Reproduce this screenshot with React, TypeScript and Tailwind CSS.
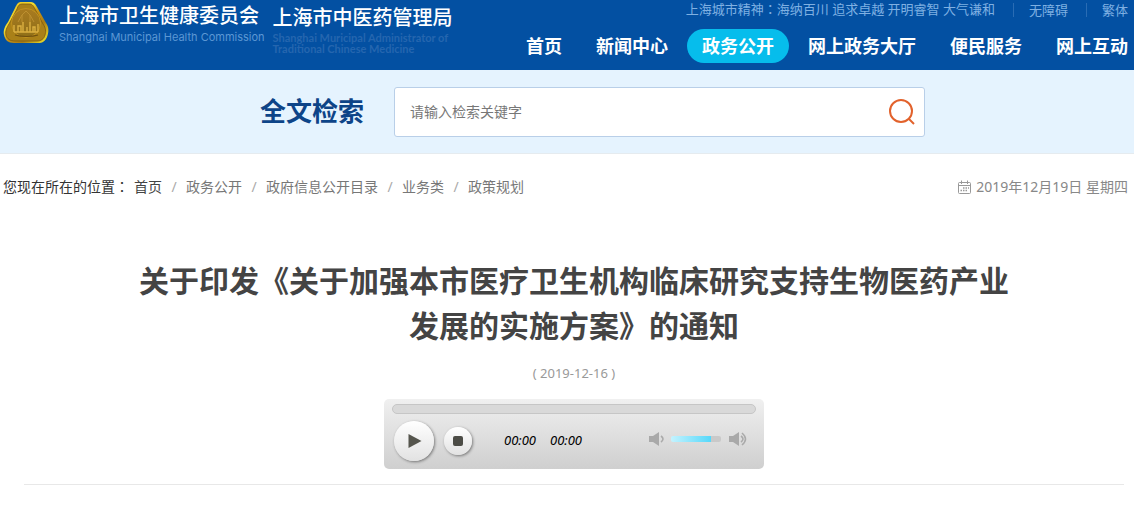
import { useState } from "react";

const navItems = ["首页", "新闻中心", "政务公开", "网上政务大厅", "便民服务", "网上互动"];
const crumbs = ["首页", "政务公开", "政府信息公开目录", "业务类", "政策规划"];

const Emblem = () => (
  <svg viewBox="0 0 46 42" className="h-[42px] w-[46px] shrink-0" aria-hidden="true">
    <defs>
      <linearGradient id="rim" x1="0" y1="0" x2="1" y2="1">
        <stop offset="0" stopColor="#e0b01c" />
        <stop offset="0.35" stopColor="#f3de30" />
        <stop offset="0.5" stopColor="#c79216" />
        <stop offset="0.7" stopColor="#a87c14" />
        <stop offset="1" stopColor="#f8f02e" />
      </linearGradient>
      <linearGradient id="face" x1="0" y1="0" x2="0" y2="1">
        <stop offset="0" stopColor="#a97b20" />
        <stop offset="1" stopColor="#8f6f18" />
      </linearGradient>
    </defs>
    <path
      d="M18 1H27C30 1 32 2 34 6L43 22C46 26 46 31 44 36C42 40 40 42 35 42H11C5 42 2 39 1 34C0 29 2 25 5 21L12 7C14 3 15 1 18 1Z"
      fill="url(#rim)"
    />
    <path
      d="M19 3H26C29 3 30 4 32 8L40 23C43 27 43 31 42 34C41 38 38 40 34 40H12C7 40 4 38 3 34C2 30 4 26 6 23L14 8C15 5 16 3 19 3Z"
      fill="#a98018"
      stroke="#7c5810"
      strokeWidth="0.8"
    />
    <circle cx="23" cy="22" r="14.5" fill="url(#face)" stroke="#c2921f" strokeWidth="1" />
    <path
      d="M19 21V14L23 10L27 14V21M15 21L19 14M31 21L27 14"
      fill="none"
      stroke="#bd9030"
      strokeWidth="1"
    />
    <path
      d="M11 24V31M15 31V25H18V31M20 31V21M24 31V26M27 31V21M30 31V26H32V31M35 23V31M11 31H35"
      fill="none"
      stroke="#dcb040"
      strokeWidth="1.4"
    />
    <path d="M12 34C18 36 29 36 35 34" fill="none" stroke="#70500f" strokeWidth="1.2" />
  </svg>
);

const CalendarIcon = () => (
  <svg viewBox="0 0 14 14" className="h-[14px] w-[14px]" fill="none" stroke="#999" aria-hidden="true">
    <rect x="0.5" y="2.5" width="12" height="11" rx="1" />
    <path d="M0.5 5.5H12.5M3.5 0.5V4M9.5 0.5V4" />
    <path d="M5 8H6.5M7.5 8H9M10 8H11M2.5 10.5H4M5 10.5H6.5M7.5 10.5H9" strokeWidth="1.4" />
  </svg>
);

const Speaker = ({ loud }: { loud?: boolean }) => (
  <svg viewBox="0 0 20 16" className="h-4 w-5" aria-hidden="true">
    <path d="M1 5H5L11 1V15L5 11H1Z" fill="#a9a9a9" />
    <path d="M13 5Q17 8 13 11" fill="none" stroke="#aaa" strokeWidth="1.6" />
    {loud && <path d="M14 2Q21 8 14 14" fill="none" stroke="#aaa" strokeWidth="1.6" />}
  </svg>
);

// The TC face sets the full-width colon in the middle of its box
const Colon = () => <span className="font-['Noto_Sans_CJK_TC',sans-serif] leading-none">：</span>;

const Header = () => (
  <header className="flex h-[70px] justify-between overflow-hidden bg-[#0350a2] pr-[6px] pl-[3px] text-white">
    <a href="#" className="flex items-start">
      <span className="pt-px">
        <Emblem />
      </span>
      <span className="ml-[10px] flex flex-col whitespace-nowrap">
        <span className="pt-1 text-[20px] leading-6 font-medium">上海市卫生健康委员会</span>
        <span className="pt-px font-['Inter'] text-[11px] leading-4 text-[#5b97d4]">
          Shanghai Municipal Health Commission
        </span>
      </span>
      <span className="ml-2 flex flex-col whitespace-nowrap">
        <span className="pt-[6px] text-[20px] leading-6 font-medium">上海市中医药管理局</span>
        <span className="pt-[2px] font-['Lato'] text-[11px] leading-[11px] font-bold text-[#2566af]">
          Shanghai Muricipal Administrator of
          <br />
          Traditional Chinese Medicine
        </span>
      </span>
    </a>
    <div className="flex shrink-0 flex-col items-end">
      <div className="flex h-5 items-center text-[13px] text-[#7fb0e2]">
        <span>
          上海城市精神
          <Colon />
          海纳百川 追求卓越 开明睿智 大气谦和
        </span>
        <a href="#" className="ml-[18px] border-l border-[#2a6cb4] pl-[15px] leading-[14px]">
          无障碍
        </a>
        <a href="#" className="ml-[18px] border-l border-[#2a6cb4] pl-[15px] leading-[14px]">
          繁体
        </a>
      </div>
      <nav className="mt-[9px] flex gap-1 text-[18px] leading-[34px] font-bold">
        {navItems.map((item) => (
          <a
            key={item}
            href="#"
            className={
              item === "政务公开"
                ? "rounded-full bg-[#06bdec] px-[15px] whitespace-nowrap"
                : "px-[15px] whitespace-nowrap last:pr-0"
            }
          >
            {item}
          </a>
        ))}
      </nav>
    </div>
  </header>
);

const SearchBar = () => (
  <form
    className="flex h-[84px] items-center justify-center gap-[30px] border-b border-[#e5ebef] bg-[#e5f3fe] pl-[51px]"
    onSubmit={(e) => e.preventDefault()}
  >
    <label htmlFor="keyword" className="text-[26px] font-bold text-[#0d4488]">
      全文检索
    </label>
    <div className="flex h-[50px] w-full max-w-[531px] items-center rounded-[3px] border border-[#b9cfe8] bg-white pr-[6px] pl-[15px]">
      <input
        id="keyword"
        type="text"
        placeholder="请输入检索关键字"
        className="min-w-0 flex-1 text-[14px] outline-none placeholder:text-[#777]"
      />
      <button type="submit" aria-label="搜索" className="flex h-8 w-8 items-center justify-center">
        <svg viewBox="0 0 28 28" className="h-7 w-7" fill="none" stroke="#e2622c" strokeWidth="2">
          <circle cx="13" cy="13" r="11" />
          <path d="M20.5 20.5L26 26" />
        </svg>
      </button>
    </div>
  </form>
);

const AudioPlayer = () => {
  const [position, setPosition] = useState(0);
  const [volume, setVolume] = useState(80);

  return (
    <div className="mx-auto h-[70px] max-w-[380px] rounded-[5px] bg-linear-to-b from-[#f0f0f0] to-[#cfcfcf] px-2 pt-[5px]">
      <input
        type="range"
        aria-label="播放进度"
        value={position}
        onChange={(e) => setPosition(Number(e.target.value))}
        className="block h-[10px] w-full appearance-none rounded-full border border-[#c6c6c6] bg-[#d9d9d9] [&::-webkit-slider-thumb]:size-0 [&::-webkit-slider-thumb]:appearance-none"
      />
      <div className="flex items-center pt-[7px] pr-2 pl-[2px]">
        <button
          type="button"
          aria-label="播放"
          className="flex size-10 items-center justify-center rounded-full bg-linear-to-b from-white to-[#e2e2e2] shadow-[1px_1px_3px_rgba(0,0,0,0.45)]"
        >
          <svg viewBox="0 0 14 14" className="ml-[2px] size-[14px]" fill="#55554d">
            <path d="M0.5 0L13.5 7L0.5 14Z" />
          </svg>
        </button>
        <button
          type="button"
          aria-label="停止"
          className="ml-[10px] flex size-7 items-center justify-center rounded-full bg-linear-to-b from-white to-[#e2e2e2] shadow-[1px_1px_3px_rgba(0,0,0,0.45)]"
        >
          <span className="size-[10px] rounded-[2px] bg-[#4c4c46]" />
        </button>
        <div className="ml-8 flex gap-[14px] pb-[2px] text-[13px] leading-4 text-black italic">
          <span>00:00</span>
          <span>00:00</span>
        </div>
        <div className="ml-auto flex items-center gap-[3px] pb-1">
          <Speaker />
          <input
            type="range"
            aria-label="音量"
            value={volume}
            onChange={(e) => setVolume(Number(e.target.value))}
            style={{
              backgroundImage: `linear-gradient(to right, #c4f3ff, #56d8fa ${volume}%, #c9c9c9 ${volume}%)`,
            }}
            className="h-[6px] w-[50px] appearance-none rounded-[2px] [&::-webkit-slider-thumb]:size-0 [&::-webkit-slider-thumb]:appearance-none"
          />
          <span className="ml-1">
            <Speaker loud />
          </span>
        </div>
      </div>
    </div>
  );
};

export default function App() {
  return (
    <div className="bg-white font-['Noto_Sans','Noto_Sans_CJK_SC',sans-serif]">
      <Header />
      <SearchBar />

      <div className="flex justify-between pt-[23px] pr-[6px] pl-[3px] text-[14px] leading-5 text-[#777]">
        <nav className="flex" aria-label="您现在所在的位置">
          <span className="mr-[5px] text-[#333]">
            您现在所在的位置
            <Colon />
          </span>
          {crumbs.map((crumb, i) => (
            <span key={crumb} className="flex">
              {i > 0 && <span className="w-6 text-center text-[#aaa]">/</span>}
              <a href="#" className={i === 0 ? "text-[#444]" : undefined}>
                {crumb}
              </a>
            </span>
          ))}
        </nav>
        <div className="flex items-center gap-1 text-[#888]">
          <CalendarIcon />
          <span>2019年12月19日 星期四</span>
        </div>
      </div>

      <article className="mr-[10px] ml-6 border-b border-[#e8e8e8] pt-[61px] pb-[15px]">
        <h1 className="px-[110px] text-center text-[30px] leading-[45px] font-bold text-[#444]">
          关于印发《关于加强本市医疗卫生机构临床研究支持生物医药产业发展的实施方案》的通知
        </h1>
        <p className="py-4 text-center text-[13px] leading-[19px] text-[#999]">( 2019-12-16 )</p>
        <AudioPlayer />
      </article>
    </div>
  );
}
